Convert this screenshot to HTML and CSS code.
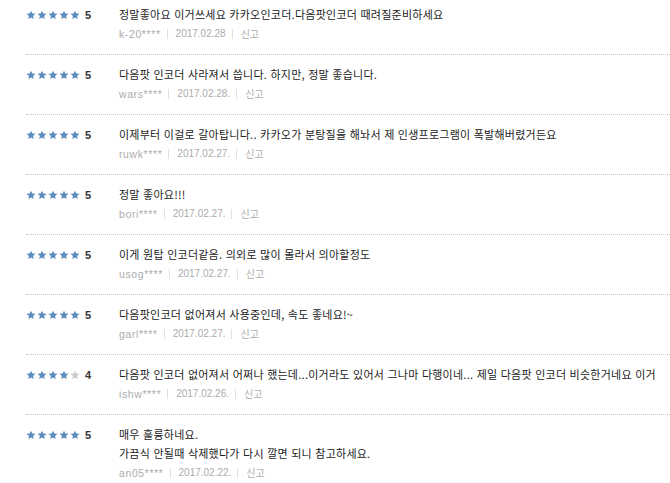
FILE: index.html
```html
<!DOCTYPE html>
<html lang="ko">
<head>
<meta charset="utf-8">
<link rel="stylesheet" href="styles.css">
</head>
<body>
<svg width="0" height="0" class="defs" aria-hidden="true">
  <defs>
    <symbol id="star" viewBox="0 0 24 24"><path d="M12 1.5l3.1 7.1 7.6.6-5.8 5 1.8 7.5L12 17.7l-6.7 4 1.8-7.5-5.8-5 7.6-.6z"/></symbol>
  </defs>
</svg>
<ul class="reviews">
  <li class="review">
    <div class="rating"><span class="stars"><svg class="s on"><use href="#star"/></svg><svg class="s on"><use href="#star"/></svg><svg class="s on"><use href="#star"/></svg><svg class="s on"><use href="#star"/></svg><svg class="s on"><use href="#star"/></svg></span><b class="score">5</b></div>
    <div class="body"><p class="text">정말좋아요 이거쓰세요 카카오인코더.다음팟인코더 때려질준비하세요</p><p class="meta"><span class="user">k-20****</span><i class="sep"></i><span>2017.02.28</span><i class="sep"></i><span>신고</span></p></div>
  </li>
  <li class="review">
    <div class="rating"><span class="stars"><svg class="s on"><use href="#star"/></svg><svg class="s on"><use href="#star"/></svg><svg class="s on"><use href="#star"/></svg><svg class="s on"><use href="#star"/></svg><svg class="s on"><use href="#star"/></svg></span><b class="score">5</b></div>
    <div class="body"><p class="text">다음팟 인코더 사라져서 씁니다. 하지만, 정말 좋습니다.</p><p class="meta"><span class="user">wars****</span><i class="sep"></i><span>2017.02.28.</span><i class="sep"></i><span>신고</span></p></div>
  </li>
  <li class="review">
    <div class="rating"><span class="stars"><svg class="s on"><use href="#star"/></svg><svg class="s on"><use href="#star"/></svg><svg class="s on"><use href="#star"/></svg><svg class="s on"><use href="#star"/></svg><svg class="s on"><use href="#star"/></svg></span><b class="score">5</b></div>
    <div class="body"><p class="text">이제부터 이걸로 갈아탑니다.. 카카오가 분탕질을 해놔서 제 인생프로그램이 폭발해버렸거든요</p><p class="meta"><span class="user">ruwk****</span><i class="sep"></i><span>2017.02.27.</span><i class="sep"></i><span>신고</span></p></div>
  </li>
  <li class="review">
    <div class="rating"><span class="stars"><svg class="s on"><use href="#star"/></svg><svg class="s on"><use href="#star"/></svg><svg class="s on"><use href="#star"/></svg><svg class="s on"><use href="#star"/></svg><svg class="s on"><use href="#star"/></svg></span><b class="score">5</b></div>
    <div class="body"><p class="text">정말 좋아요!!!</p><p class="meta"><span class="user">bori****</span><i class="sep"></i><span>2017.02.27.</span><i class="sep"></i><span>신고</span></p></div>
  </li>
  <li class="review">
    <div class="rating"><span class="stars"><svg class="s on"><use href="#star"/></svg><svg class="s on"><use href="#star"/></svg><svg class="s on"><use href="#star"/></svg><svg class="s on"><use href="#star"/></svg><svg class="s on"><use href="#star"/></svg></span><b class="score">5</b></div>
    <div class="body"><p class="text">이게 원탑 인코더같음. 의외로 많이 몰라서 의아할정도</p><p class="meta"><span class="user">usog****</span><i class="sep"></i><span>2017.02.27.</span><i class="sep"></i><span>신고</span></p></div>
  </li>
  <li class="review">
    <div class="rating"><span class="stars"><svg class="s on"><use href="#star"/></svg><svg class="s on"><use href="#star"/></svg><svg class="s on"><use href="#star"/></svg><svg class="s on"><use href="#star"/></svg><svg class="s on"><use href="#star"/></svg></span><b class="score">5</b></div>
    <div class="body"><p class="text">다음팟인코더 없어져서 사용중인데, 속도 좋네요!~</p><p class="meta"><span class="user">garl****</span><i class="sep"></i><span>2017.02.27.</span><i class="sep"></i><span>신고</span></p></div>
  </li>
  <li class="review">
    <div class="rating"><span class="stars"><svg class="s on"><use href="#star"/></svg><svg class="s on"><use href="#star"/></svg><svg class="s on"><use href="#star"/></svg><svg class="s on"><use href="#star"/></svg><svg class="s off"><use href="#star"/></svg></span><b class="score">4</b></div>
    <div class="body"><p class="text">다음팟 인코더 없어져서 어쩌나 했는데...이거라도 있어서 그나마 다행이네... 제일 다음팟 인코더 비슷한거네요 이거</p><p class="meta"><span class="user">ishw****</span><i class="sep"></i><span>2017.02.26.</span><i class="sep"></i><span>신고</span></p></div>
  </li>
  <li class="review">
    <div class="rating"><span class="stars"><svg class="s on"><use href="#star"/></svg><svg class="s on"><use href="#star"/></svg><svg class="s on"><use href="#star"/></svg><svg class="s on"><use href="#star"/></svg><svg class="s on"><use href="#star"/></svg></span><b class="score">5</b></div>
    <div class="body"><p class="text">매우 훌륭하네요.<br>가끔식 안될때 삭제했다가 다시 깔면 되니 참고하세요.</p><p class="meta"><span class="user">an05****</span><i class="sep"></i><span>2017.02.22.</span><i class="sep"></i><span>신고</span></p></div>
  </li>
</ul>
</body>
</html>
```
FILE: styles.css
```css
html, body {
  margin: 0;
  padding: 0;
  background: #fff;
  overflow: hidden;
}
body {
  font-family: "Noto Sans CJK KR", "Noto Sans", sans-serif;
  color: #222;
}
.defs {
  position: absolute;
  width: 0;
  height: 0;
}
.reviews {
  list-style: none;
  margin: -5px 0 0 26px;
  padding: 0;
}
.review {
  display: flex;
  padding: 10px 0 11px;
  border-bottom: 1px dotted #c4c4c4;
}
.rating {
  width: 93px;
  flex: none;
  display: flex;
  align-items: center;
  height: 19px;
}
.stars {
  display: flex;
  gap: 1px;
}
.s {
  width: 10px;
  height: 10px;
  display: block;
}
.s.on { fill: #5b8cbf; }
.s.off { fill: #cccccc; }
.score {
  margin-left: 5px;
  font-family: "Liberation Sans", sans-serif;
  font-weight: bold;
  font-size: 11px;
  color: #333;
}
.body { flex: 1; min-width: 0; }
.text {
  margin: 0;
  font-size: 11px;
  line-height: 19px;
  white-space: nowrap;
  letter-spacing: 0.25px;
}
.meta {
  margin: 0;
  display: flex;
  align-items: center;
  height: 19px;
  font-size: 10px;
  color: #acacac;
  font-family: "Liberation Sans", "Noto Sans CJK KR", sans-serif;
}
.user {
  font-size: 10.5px;
  letter-spacing: 0.6px;
}
.sep {
  display: block;
  width: 1px;
  height: 10px;
  background: #e0e0e0;
  margin: 0 8px 0 6px;
}
```
